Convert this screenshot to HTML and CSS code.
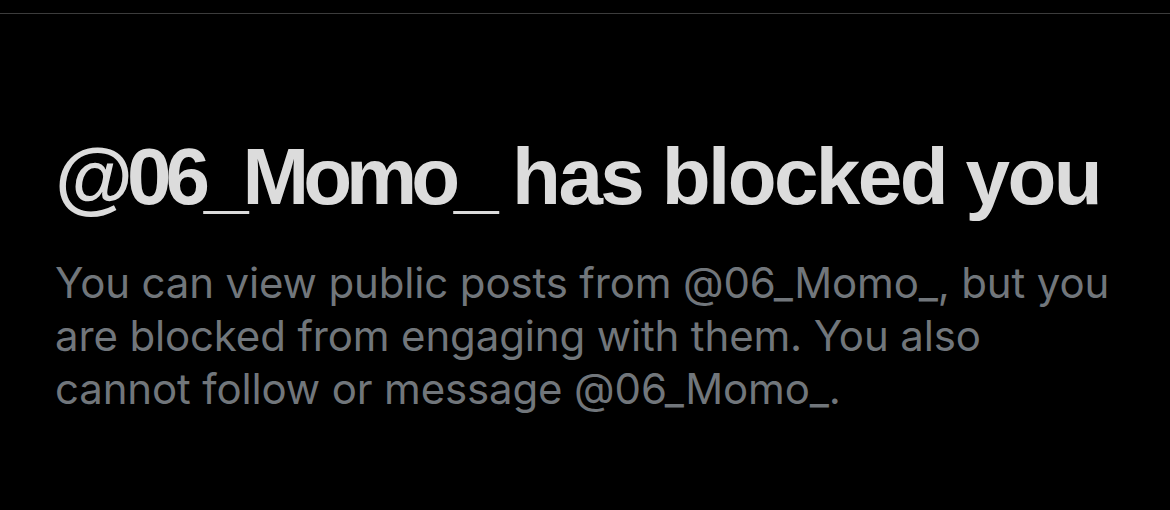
FILE: index.html
```html
<!DOCTYPE html>
<html>
<head>
<meta charset="utf-8">
<link rel="stylesheet" href="styles.css">
</head>
<body>
<div class="page">
  <div class="topbar"></div>
  <section class="blocked">
    <h1 class="title"><span class="handle">@06_Momo_</span> has blocked you</h1>
    <p class="desc">You can view public posts from @06_Momo_, but you<br>are blocked from engaging with them. You also<br>cannot follow or message @06_Momo_.</p>
  </section>
</div>
</body>
</html>
```
FILE: styles.css
```css
html, body {
  margin: 0;
  padding: 0;
  background: #000;
}
.page {
  width: 1170px;
  height: 510px;
  background: #000;
  overflow: hidden;
}
.topbar {
  height: 13px;
  border-bottom: 1px solid #3c3c3c;
}
.blocked {
  padding: 0 0 0 55px;
}
.title {
  margin: 123px 0 0 0;
  font-family: "Liberation Sans", Arial, sans-serif;
  font-weight: 700;
  font-size: 80px;
  line-height: 80px;
  letter-spacing: -2.6px;
  color: #dcdcdc;
  white-space: nowrap;
}
.handle {
  letter-spacing: -6px;
}
.desc {
  margin: 39px 0 0 0;
  font-family: Inter, "Liberation Sans", sans-serif;
  font-weight: 400;
  font-size: 42px;
  line-height: 53px;
  letter-spacing: -0.15px;
  color: #71767b;
  white-space: nowrap;
}
```
